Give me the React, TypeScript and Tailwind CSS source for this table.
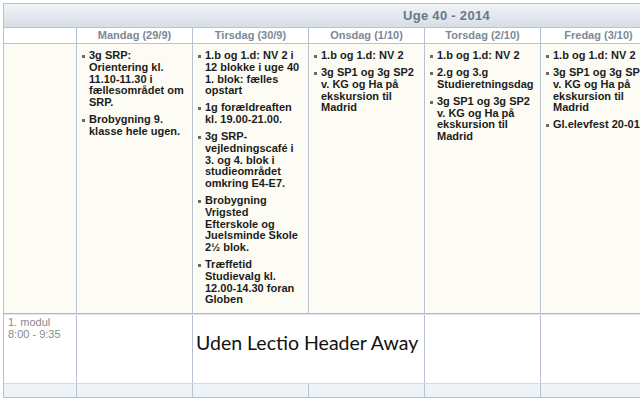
import React from 'react'

interface Day {
  name: string
  items: string[]
}

const days: Day[] = [
  {
    name: 'Mandag (29/9)',
    items: [
      '3g SRP: Orientering kl. 11.10-11.30 i fællesområdet om SRP.',
      'Brobygning 9. klasse hele ugen.',
    ],
  },
  {
    name: 'Tirsdag (30/9)',
    items: [
      '1.b og 1.d: NV 2 i 12 blokke i uge 40 1. blok: fælles opstart',
      '1g forældreaften kl. 19.00-21.00.',
      '3g SRP-vejledningscafé i 3. og 4. blok i studieområdet omkring E4-E7.',
      'Brobygning Vrigsted Efterskole og Juelsminde Skole 2½ blok.',
      'Træffetid Studievalg kl. 12.00-14.30 foran Globen',
    ],
  },
  {
    name: 'Onsdag (1/10)',
    items: ['1.b og 1.d: NV 2', '3g SP1 og 3g SP2 v. KG og Ha på ekskursion til Madrid'],
  },
  {
    name: 'Torsdag (2/10)',
    items: [
      '1.b og 1.d: NV 2',
      '2.g og 3.g Studieretningsdag',
      '3g SP1 og 3g SP2 v. KG og Ha på ekskursion til Madrid',
    ],
  },
  {
    name: 'Fredag (3/10)',
    items: [
      '1.b og 1.d: NV 2',
      '3g SP1 og 3g SP2 v. KG og Ha på ekskursion til Madrid',
      'Gl.elevfest 20-01',
    ],
  },
  { name: 'Lørdag (4/10)', items: [] },
  { name: 'Søndag (5/10)', items: [] },
]

const cols = 'grid grid-cols-[73px_repeat(7,116px)]'
const cell = 'border-r border-[#b8c3d1]'

function Note({ text }: { text: string }) {
  return (
    <div className="flex items-start">
      <span className="mt-[5px] mr-[4px] h-[3px] w-[3px] shrink-0 bg-[#6a6a6a]" />
      <span className="w-[99px]">{text}</span>
    </div>
  )
}

export default function App() {
  return (
    <div className="h-[400px] w-[640px] overflow-hidden bg-white font-['Liberation_Sans',Arial,sans-serif]">
      <div className="ml-[3px] mt-[3px] w-max border-l border-t border-[#b8c3d1]">
        {/* Ugehoved */}
        <div className="flex h-[24px] items-center justify-center border-b border-[#b8c3d1] bg-gradient-to-b from-[#f1f4f7] to-[#d6dee6] text-[13px] font-bold tracking-[0.3px] text-[#6b7886]">
          Uge 40 - 2014
        </div>

        {/* Dage */}
        <div className={`${cols} h-[16px] border-b border-[#b8c3d1] bg-white`}>
          <div className={cell} />
          {days.map((d) => (
            <div
              key={d.name}
              className={`${cell} text-center text-[11px] font-bold leading-[15px] text-[#7d8995]`}
            >
              {d.name}
            </div>
          ))}
        </div>

        {/* Aktiviteter */}
        <div className={`${cols} h-[270px] border-b border-[#aeb9c7] bg-[#fcfcf4]`}>
          <div className={cell} />
          {days.map((d) => (
            <div
              key={d.name}
              className={`${cell} flex flex-col gap-[5.25px] pl-[5px] pt-[6px] text-[11px] font-bold leading-[11.75px] text-[#1c1c1c]`}
            >
              {d.items.map((t, i) => (
                <Note key={i} text={t} />
              ))}
            </div>
          ))}
        </div>

        {/* 1. modul */}
        <div className={`${cols} h-[70px] border-b border-t border-b-[#d3dce7] border-t-[#e2e8ef] bg-white`}>
          <div className={`${cell} pl-[4px] pt-[2px] text-[11px] leading-[11.5px] text-[#8a8a8a]`}>
            1. modul
            <br />
            8:00 - 9:35
          </div>
          <div className={cell} />
          <div className={`${cell} col-span-2 pl-[3px] pt-[16px] font-['Lato',sans-serif] text-[19.5px] leading-[24px] text-[#111]`}>
            Uden Lectio Header Away
          </div>
          <div className={cell} />
          <div className={cell} />
          <div className={cell} />
          <div className={cell} />
        </div>

        {/* næste række */}
        <div className={`${cols} h-[14px] border-b border-[#b8c3d1] bg-[#eef3f8]`}>
          <div className={cell} />
          {days.map((d) => (
            <div key={d.name} className={cell} />
          ))}
        </div>
      </div>
    </div>
  )
}
